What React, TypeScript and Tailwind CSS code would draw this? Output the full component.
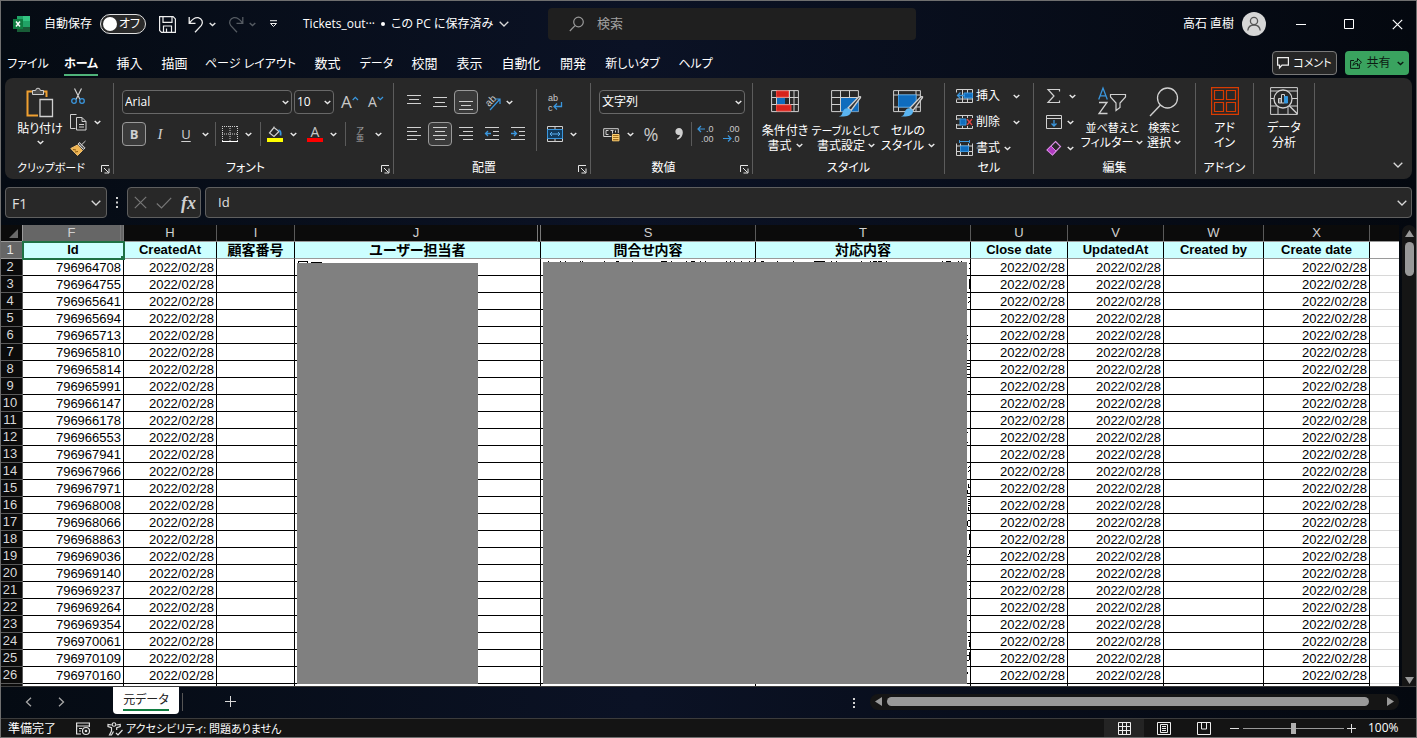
import { useState, type ReactNode } from 'react'

const DATE = '2022/02/28'

const ids = [
  796964708, 796964755, 796965641, 796965694, 796965713, 796965810, 796965814,
  796965991, 796966147, 796966178, 796966553, 796967941, 796967966, 796967971,
  796968008, 796968066, 796968863, 796969036, 796969140, 796969237, 796969264,
  796969354, 796970061, 796970109, 796970160,
]

const columns = [
  { letter: 'F', title: 'Id', width: 'w-[101px]' },
  { letter: 'H', title: 'CreatedAt', width: 'w-[93px]' },
  { letter: 'I', title: '顧客番号', width: 'w-[78px]', jp: true },
  { letter: 'J', title: 'ユーザー担当者', width: 'w-[246px]', jp: true },
  { letter: 'S', title: '問合せ内容', width: 'w-[215px]', jp: true },
  { letter: 'T', title: '対応内容', width: 'w-[215px]', jp: true },
  { letter: 'U', title: 'Close date', width: 'w-[97px]' },
  { letter: 'V', title: 'UpdatedAt', width: 'w-[96px]' },
  { letter: 'W', title: 'Created by', width: 'w-[100px]' },
  { letter: 'X', title: 'Create date', width: 'w-[106px]' },
]

const dateColumns = ['H', 'U', 'V', 'X']

const menuTabs = [
  { label: 'ファイル', style: 'w-[54px] text-[12px]' },
  { label: 'ホーム', style: 'w-[52px] text-[12px]', active: true },
  { label: '挿入', style: 'w-[45px] text-[13px]' },
  { label: '描画', style: 'w-[45px] text-[13px]' },
  { label: 'ページ レイアウト', style: 'w-[107px] text-[12px]' },
  { label: '数式', style: 'w-[47px] text-[13px]' },
  { label: 'データ', style: 'w-[51px] text-[12px]' },
  { label: '校閲', style: 'w-[45px] text-[13px]' },
  { label: '表示', style: 'w-[45px] text-[13px]' },
  { label: '自動化', style: 'w-[58px] text-[13px]' },
  { label: '開発', style: 'w-[46px] text-[13px]' },
  { label: '新しいタブ', style: 'w-[73px] text-[12px]' },
  { label: 'ヘルプ', style: 'w-[53px] text-[12px]' },
]

// [x, width] of the glyph tops that show above the covered S and T cells
const topMarks = [
  [8, 1], [20, 1], [25, 1], [40, 1], [42, 1], [64, 1], [76, 3], [92, 1],
  [121, 6], [131, 1], [146, 1], [151, 4], [160, 1], [165, 1], [186, 1],
  [190, 1], [194, 1], [201, 1], [209, 1], [214, 1], [221, 3], [237, 1],
  [253, 1], [274, 11], [291, 1], [296, 1], [321, 1], [330, 1], [333, 4],
  [338, 4], [346, 1], [402, 1], [406, 5], [418, 1], [421, 1],
]

// [x, y, width, height] of the glyph edges right of the covered T cells
const sideMarks = [
  [2, 8, 1, 1], [2, 13, 1, 1], [2, 24, 1, 10], [1, 42, 2, 1], [2, 46, 1, 1],
  [1, 47, 1, 1], [0, 80, 1, 1], [0, 84, 1, 1], [2, 95, 1, 1], [0, 108, 3, 1],
  [0, 111, 3, 1], [0, 114, 3, 1], [0, 119, 3, 1], [1, 136, 2, 1],
  [0, 177, 1, 1], [0, 187, 1, 1], [2, 211, 1, 1], [1, 212, 1, 1],
  [2, 215, 1, 1], [1, 216, 1, 1], [1, 229, 1, 4], [1, 232, 2, 1],
  [0, 235, 1, 4], [1, 238, 2, 1], [1, 244, 2, 1], [1, 246, 2, 1],
  [1, 248, 2, 1], [1, 250, 2, 1], [1, 252, 1, 4], [1, 255, 2, 1],
  [0, 266, 1, 5], [1, 265, 2, 1], [1, 271, 2, 1], [2, 279, 1, 6],
  [2, 295, 1, 4], [1, 299, 1, 1], [0, 301, 3, 1], [0, 305, 1, 1],
  [2, 330, 1, 1], [2, 334, 1, 1], [2, 365, 1, 1], [1, 381, 2, 1],
  [1, 385, 2, 1], [2, 387, 1, 5], [2, 397, 1, 8], [0, 400, 3, 1],
  [0, 405, 2, 1], [0, 417, 1, 2],
]

function Svg({ w = 16, h = 16, className = '', children }: { w?: number; h?: number; className?: string; children: ReactNode }) {
  return (
    <svg
      width={w}
      height={h}
      viewBox={`0 0 ${w} ${h}`}
      fill="none"
      stroke="#d0d0d0"
      className={`block shrink-0 overflow-visible font-['Liberation_Sans'] ${className}`}
      aria-hidden
    >
      {children}
    </svg>
  )
}

function Chevron({ className = 'text-[#e6e6e6]' }: { className?: string }) {
  return (
    <svg width="7" height="5" viewBox="0 0 7 5" fill="none" stroke="currentColor" strokeWidth="1.4" className={`block shrink-0 ${className}`} aria-hidden>
      <path d="M.7 1l2.800 2.600L6.300 1" />
    </svg>
  )
}

function WideChevron() {
  return (
    <svg width="10" height="6" viewBox="0 0 10 6" fill="none" stroke="#d8d8d8" strokeWidth="1.3" className="block shrink-0" aria-hidden>
      <path d="M.7.800L5 5 9.300.800" />
    </svg>
  )
}

function Tool({ label, active, children }: { label: string; active?: boolean; children: ReactNode }) {
  return (
    <button
      aria-label={label}
      className={`mx-px flex h-6 w-6 shrink-0 items-center justify-center rounded border ${
        active ? 'border-[#9a9a9a] bg-[#3a3a3a]' : 'border-transparent'
      }`}
    >
      {children}
    </button>
  )
}

function Drop({ label, className = 'w-4' }: { label: string; className?: string }) {
  return (
    <button aria-label={label} className={`flex h-6 shrink-0 items-center justify-center ${className}`}>
      <Chevron />
    </button>
  )
}

function Divider() {
  return <div className="mx-1 h-6 w-px shrink-0 bg-[#5a5a5a]" />
}

function Group({ label, launcher, width, children }: { label?: string; launcher?: boolean; width: string; children: ReactNode }) {
  return (
    <section className={`my-[5px] flex shrink-0 flex-col border-r border-[#5c5c5c] ${width}`}>
      <div className="flex min-h-0 flex-1">{children}</div>
      <div className="flex h-3 items-center">
        <span className={`flex-1 text-center ${label === 'クリップボード' ? 'text-[11px]' : ''}`}>{label}</span>
        {launcher ? (
          <button aria-label={`${label}の設定`} className="flex w-4 justify-end pr-[3px] pt-0.5">
            <Svg w={9} h={9}>
              <path d="M.5 7V.500H8M3 3l4.500 4.500M8 3.500V8H3.500" stroke="#e4e4e4" />
            </Svg>
          </button>
        ) : null}
      </div>
    </section>
  )
}

function BigButton({ icon, lines, drop, small, width }: { icon: ReactNode; lines: string[]; drop?: boolean; small?: boolean; width: string }) {
  return (
    <button className={`flex shrink-0 flex-col items-center pt-1 ${width}`}>
      <span className="flex h-[33px] items-start justify-center">{icon}</span>
      <span className={`leading-[15px] ${small ? 'text-[11px]' : ''}`}>{lines[0]}</span>
      <span className={`flex items-center leading-[15px] ${small ? 'gap-[3px]' : 'gap-1'}`}>
        {lines[1]}
        {drop ? <Chevron /> : null}
      </span>
    </button>
  )
}

function Lines({ rows }: { rows: number[][] }) {
  return (
    <Svg>
      {rows.map(([x, y, w]) => (
        <path key={y} d={`M${x} ${y}.5h${w}`} />
      ))}
    </Svg>
  )
}

function Combo({ label, value, width }: { label: string; value: string; width: string }) {
  return (
    <div className={`relative h-6 shrink-0 ${width}`}>
      <select
        aria-label={label}
        defaultValue={value}
        className="h-6 w-full appearance-none rounded border border-[#686868] bg-[#262626] pl-0.5 text-[12px] text-white"
      >
        <option>{value}</option>
      </select>
      <span className="pointer-events-none absolute right-[3px] top-[10px]">
        <Chevron />
      </span>
    </div>
  )
}

function TitleBar() {
  const [autoSave, setAutoSave] = useState(false)
  return (
    <header className="flex h-[47px] shrink-0 items-center pb-px">
      <div className="flex w-[547px] shrink-0 items-center pl-3">
        <svg width="17" height="16" viewBox="0 0 17 16" className="block shrink-0" aria-label="Excel">
          <path d="M4 0h6v5H4z" fill="#21a366" />
          <path d="M10 0h7v5h-7z" fill="#33c481" />
          <path d="M4 5h6v6H4z" fill="#107c41" />
          <path d="M10 5h7v6h-7z" fill="#21a366" />
          <path d="M4 11h13v5H4z" fill="#185c37" />
          <path d="M0 3h10v10H0z" fill="#107c41" />
          <path d="M3 5.500l4 5M7 5.500l-4 5" stroke="#fff" strokeWidth="1.500" />
        </svg>
        <label htmlFor="autosave" className="ml-[14px] w-14 text-[12px]">自動保存</label>
        <div className="relative h-5 w-[46px] shrink-0">
          <input
            id="autosave"
            type="checkbox"
            checked={autoSave}
            onChange={(e) => setAutoSave(e.target.checked)}
            className="block h-5 w-[46px] appearance-none rounded-full border border-[#e0e0e0] bg-[#2a2a2a] before:ml-[2px] before:mt-[2px] before:block before:h-[14px] before:w-[14px] before:rounded-full before:bg-white"
          />
          <span className="pointer-events-none absolute right-1.5 top-0.5 text-[12px] leading-4">オフ</span>
        </div>
        <button aria-label="上書き保存" className="ml-[13px]">
          <Svg w={17} h={17}>
            <path d="M.6.600h13.500l2.300 2.300v13.500H2.500L.6 14.500zM4 .6v5.800h9V.600M4.500 16.400V10h8v6.400M7.500 16v-3.500" stroke="#eee" strokeWidth="1.200" />
          </Svg>
        </button>
        <button aria-label="元に戻す" className="ml-3">
          <Svg w={16} h={17}>
            <path d="M1.200 1v6.300h6.300M1.500 7C4 3.500 7 1.200 10.200 1.700c3.800.7 5.400 4.800 3.200 7.700L7 16.200" stroke="#eee" strokeWidth="1.300" />
          </Svg>
        </button>
        <Drop label="元に戻す一覧" />
        <button aria-label="やり直し" className="ml-2">
          <Svg w={16} h={17}>
            <path d="M14.800 1v6.300H8.500M14.500 7C12 3.500 9 1.200 5.800 1.700 2 2.400.4 6.500 2.600 9.400L9 16.200" stroke="#555b62" strokeWidth="1.300" />
          </Svg>
        </button>
        <span className="flex w-4 justify-center">
          <Chevron className="text-[#555b62]" />
        </span>
        <button aria-label="クイック アクセス ツール バーのカスタマイズ" className="ml-[9px]">
          <Svg w={9} h={8}>
            <path d="M1 .700h7" stroke="#eee" />
            <path d="M1.500 3.500h6l-3 3z" stroke="#eee" />
          </Svg>
        </button>
        <button className="ml-[25px] flex items-center gap-1.5 whitespace-nowrap text-[12px]">
          <span>Tickets_out···</span>
          <span className="h-1 w-1 rounded-full bg-white" />
          <span>この PC に保存済み</span>
          <WideChevron />
        </button>
      </div>
      <label className="flex h-8 min-w-0 max-w-[368px] flex-1 items-center rounded bg-[#1f1f1f] pl-[21px]">
        <Svg w={16} h={16}>
          <circle cx="9.500" cy="6" r="4.800" stroke="#999" strokeWidth="1.200" />
          <path d="M6 9.600L.8 15" stroke="#999" strokeWidth="1.200" />
        </Svg>
        <input type="search" placeholder="検索" aria-label="検索" className="ml-3 w-full bg-transparent text-[13px] placeholder:text-[#a0a0a0]" />
      </label>
      <div className="ml-auto flex shrink-0 items-center">
        <span className="text-[12px]">高石 直樹</span>
        <button aria-label="アカウント" className="ml-2 flex h-6 w-6 items-center justify-center rounded-full bg-[#d6d6d6]">
          <Svg>
            <circle cx="8" cy="5" r="3.600" stroke="#555" strokeWidth="1.300" />
            <path d="M1.800 14.500c.4-3.800 2.900-5.500 6.200-5.500s5.800 1.700 6.200 5.500" stroke="#555" strokeWidth="1.300" />
          </Svg>
        </button>
        <button aria-label="最小化" className="flex h-8 w-12 items-center justify-center pl-[22px]">
          <Svg w={10} h={10}><path d="M0 5.500h10" stroke="#fff" /></Svg>
        </button>
        <button aria-label="最大化" className="flex h-8 w-12 items-center justify-center pl-[22px]">
          <Svg w={10} h={10}><path d="M.5.500h9v9h-9z" stroke="#fff" /></Svg>
        </button>
        <button aria-label="閉じる" className="flex h-8 w-[54px] items-center justify-center pl-4">
          <Svg w={11} h={11}><path d="M.8.800l9.400 9.400M10.200.8L.8 10.200" stroke="#fff" strokeWidth="1.200" /></Svg>
        </button>
      </div>
    </header>
  )
}

function MenuBar() {
  return (
    <nav className="flex h-[30px] shrink-0 items-center">
      {menuTabs.map((tab) => (
        <button key={tab.label} className={`flex h-full shrink-0 items-center justify-center whitespace-nowrap pt-0.5 ${tab.style}`}>
          {tab.active ? (
            <span className="border-b-2 border-[#4fb37a] pt-0.5 font-bold leading-5">{tab.label}</span>
          ) : (
            tab.label
          )}
        </button>
      ))}
      <button className="ml-auto flex h-6 w-[65px] items-center justify-center gap-1 rounded border border-[#7a7a7a] bg-[#262626] text-[11px]">
        <Svg w={12} h={12}>
          <path d="M.6.600h10.800v7.500H5L2.500 11V8.100H.6z" stroke="#eee" strokeWidth="1.200" />
        </Svg>
        コメント
      </button>
      <button className="ml-2 mr-[7px] flex h-6 w-16 items-center justify-center gap-1 rounded bg-[#3aa35f] text-[12px] text-[#0c1a12]">
        <Svg w={12} h={12}>
          <path d="M4 3.500H.600v7.900h8.800V8M3 8.500c.3-3 2-4.300 4.500-4.300V1.500l4 3.800-4 3.600V6.500C5.500 6.500 4 7 3 8.500z" stroke="#0c1a12" />
        </Svg>
        共有
        <Chevron className="ml-0.5 text-[#0c1a12]" />
      </button>
    </nav>
  )
}

const brush = (
  <>
    <path d="M29.500 7.500L20 20.500l-3-2.500L27.300 7.200c1.200-1 2.800-.6 2.200.3z" fill="#333" stroke="#d0d0d0" strokeWidth="1.300" />
    <path d="M16.500 18.200c2.200.3 3.500 1.700 3.500 3.500-.3 3.800-5 5.300-12 4.800 3-1 3-2.500 3.700-4.500.8-2.400 2.500-4 4.800-3.800z" fill="#5ab4f0" stroke="none" />
  </>
)

function Ribbon() {
  return (
    <div className="mx-1 flex h-[101px] shrink-0 overflow-hidden whitespace-nowrap rounded-lg bg-[#282828] text-[12px] leading-4">
      <Group label="クリップボード" launcher width="w-[109px]">
        <button className="ml-[5px] flex w-[60px] shrink-0 flex-col items-center pt-1">
          <Svg w={28} h={31}>
            <path d="M8 4.500H1.500v24H12M15 4.500h5.500V10" stroke="#f0a030" strokeWidth="2" />
            <path d="M6.500 7.500v-4h3.200a2.300 2.300 0 0 1 4.600 0h3.200v4z" fill="#4a4a4a" />
            <path d="M14 12.500h12.500v17H14z" fill="#282828" strokeWidth="1.300" />
          </Svg>
          <span className="mb-0.5 mt-0.5 leading-[18px]">貼り付け</span>
          <Chevron />
        </button>
        <div className="flex flex-col">
          <button aria-label="切り取り" className="flex h-[26px] items-center">
            <Svg>
              <path d="M4.500.500l5.500 11M11.500.500l-5.500 11" strokeWidth="1.200" />
              <circle cx="4" cy="13" r="2.300" stroke="#3a96dd" strokeWidth="1.300" />
              <circle cx="12" cy="13" r="2.300" stroke="#3a96dd" strokeWidth="1.300" />
            </Svg>
          </button>
          <div className="flex h-[26px] items-center">
            <button aria-label="コピー">
              <Svg w={17} h={17}>
                <path d="M5.500 14.500h-5V.500h6M6.500 3.500h5.500l4 4v8.500H6.500zM12 3.500v4h4M9 10.500h5M9 13h5" />
              </Svg>
            </button>
            <Drop label="コピーのオプション" className="w-5" />
          </div>
          <button aria-label="書式のコピー" className="flex h-[26px] items-center">
            <Svg w={17} h={17}>
              <path d="M15.500 1l-4.700 4.500M8 4l5.500 5.500 1.500-1.600L9.500 2.400z" fill="#666" />
              <path d="M7.500 5L.8 8.500 7.500 15.500l5-5z" fill="#f0b552" stroke="#f0c070" />
              <path d="M3 9.500l3 .5M5 12l3-.5" stroke="#8a5a10" />
            </Svg>
          </button>
        </div>
      </Group>

      <Group label="フォント" launcher width="w-[280px]">
        <div className="flex flex-col gap-2 pl-[7px] pt-[7px]">
          <div className="flex items-center gap-[2px] pl-px">
            <Combo label="フォント名" value="Arial" width="w-[170px]" />
            <Combo label="フォント サイズ" value="10" width="w-10" />
            <button aria-label="フォント サイズの拡大" className="ml-[5px] flex w-6 items-center text-[17px] leading-6 text-[#c8c8c8]">
              A
              <Svg w={7} h={14}><path d="M.7 5l2.600-2.600L6 5" stroke="#3a96dd" strokeWidth="1.300" /></Svg>
            </button>
            <button aria-label="フォント サイズの縮小" className="ml-px flex w-6 items-center text-[14px] leading-6 text-[#c8c8c8]">
              A
              <Svg w={7} h={14}><path d="M.7 2l2.600 2.600L6 2" stroke="#3a96dd" strokeWidth="1.300" /></Svg>
            </button>
          </div>
          <div className="flex items-center">
            <Tool label="太字" active><span className="text-[13px] font-bold text-[#d0d0d0]">B</span></Tool>
            <Tool label="斜体"><span className="font-['Liberation_Serif'] text-[15px] italic text-[#d0d0d0]">I</span></Tool>
            <Tool label="下線"><span className="text-[13px] text-[#d0d0d0] underline underline-offset-2">U</span></Tool>
            <Drop label="下線の種類" className="w-3" />
            <Divider />
            <button aria-label="罫線" className="flex w-5 justify-center">
              <Svg>
                <path d="M.5 0v15M15.500 0v15M8 0v15M0 .500h16M0 8h16" strokeDasharray="1 1" />
                <path d="M0 15.500h16" stroke="#fff" />
              </Svg>
            </button>
            <Drop label="罫線の種類" />
            <Divider />
            <button aria-label="塗りつぶしの色" className="flex w-5 justify-center">
              <Svg w={16} h={16}>
                <path d="M7 1.500L2.500 7l4.500 3.500L12 5.500 7 1.500zM7 1.500V.500" strokeWidth="1.200" />
                <path d="M11.500 4c2 .5 2.500 2.500 2 5.500" stroke="#3a96dd" strokeWidth="1.800" />
                <path d="M0 12h16v4H0z" fill="#ffff00" stroke="none" />
              </Svg>
            </button>
            <Drop label="塗りつぶしの色の一覧" />
            <button aria-label="フォントの色" className="ml-1 flex w-5 flex-col items-center">
              <span className="text-[14px] leading-3 text-[#c8c8c8]">A</span>
              <span className="h-1 w-4 bg-[#ff0000]" />
            </button>
            <Drop label="フォントの色の一覧" />
            <Divider />
            <button aria-label="ふりがなの表示" className="flex w-5 flex-col items-center text-[8px] leading-[8px] text-[#a8a8a8]">
              <span>ア</span>
              <span>亜</span>
            </button>
            <Drop label="ふりがなの設定" />
          </div>
        </div>
      </Group>

      <Group label="配置" launcher width="w-[197px]">
        <div className="flex flex-col gap-2 pl-[7px] pt-[7px]">
          <div className="flex items-center">
            <Tool label="上揃え"><Lines rows={[[1, 1, 14], [3, 5, 10], [1, 9, 14]]} /></Tool>
            <Tool label="上下中央揃え"><Lines rows={[[1, 3, 14], [3, 8, 10], [1, 12, 14]]} /></Tool>
            <Tool label="下揃え" active><Lines rows={[[1, 7, 14], [3, 11, 10], [1, 15, 14]]} /></Tool>
            <Tool label="方向">
              <Svg w={17} h={17}>
                <text x="0" y="0" fontSize="10" fill="#c8c8c8" stroke="none" transform="translate(5 13) rotate(-45)">ab</text>
                <path d="M6 16L15.500 5.500M11 5h5v5" stroke="#3a96dd" strokeWidth="1.200" />
              </Svg>
            </Tool>
            <Drop label="方向の一覧" className="w-2" />
          </div>
          <div className="flex items-center">
            <Tool label="左揃え"><Lines rows={[[1, 1, 14], [1, 5, 10], [1, 9, 14], [1, 13, 10]]} /></Tool>
            <Tool label="中央揃え" active><Lines rows={[[1, 1, 14], [3, 5, 10], [1, 9, 14], [3, 13, 10]]} /></Tool>
            <Tool label="右揃え"><Lines rows={[[1, 1, 14], [5, 5, 10], [1, 9, 14], [5, 13, 10]]} /></Tool>
            <Tool label="インデントを減らす">
              <Svg>
                <path d="M1 1.500h14M9 5.500h6M9 9.500h6M1 13.500h14" />
                <path d="M7 7.500H1.500M4 5L1.500 7.500 4 10" stroke="#3a96dd" strokeWidth="1.300" />
              </Svg>
            </Tool>
            <Tool label="インデントを増やす">
              <Svg>
                <path d="M1 1.500h14M9 5.500h6M9 9.500h6M1 13.500h14" />
                <path d="M1 7.500h5.500M4 5l2.500 2.500L4 10" stroke="#3a96dd" strokeWidth="1.300" />
              </Svg>
            </Tool>
          </div>
        </div>
        <div className="mx-[5px] mt-1.5 h-[62px] w-px bg-[#5a5a5a]" />
        <div className="flex flex-col gap-2 pt-[7px]">
          <Tool label="折り返して全体を表示する">
            <Svg w={16} h={18}>
              <text x="1" y="8" fontSize="9" fill="#c8c8c8" stroke="none">ab</text>
              <text x="1" y="18" fontSize="9" fill="#c8c8c8" stroke="none">c</text>
              <path d="M14.500 9v4.500H7.500M10 10.500l-3 3 3 3" stroke="#3a96dd" strokeWidth="1.300" />
            </Svg>
          </Tool>
          <div className="flex">
            <Tool label="セルを結合して中央揃え">
              <Svg>
                <path d="M.5.500h15v15H.500zM8 .500v3M8 12.500v3" />
                <path d="M.5 3.500h15v9H.500z" fill="#123b5c" stroke="#3a96dd" />
                <path d="M3 8h10M5 6L3 8l2 2M11 6l2 2-2 2" stroke="#5ab0f0" />
              </Svg>
            </Tool>
            <Drop label="結合の一覧" className="w-2.5" />
          </div>
        </div>
      </Group>

      <Group label="数値" launcher width="w-[162px]">
        <div className="flex flex-col gap-2 pl-2 pt-[7px]">
          <Combo label="表示形式" value="文字列" width="w-[146px]" />
          <div className="flex items-center">
            <button aria-label="通貨表示形式" className="flex w-6 justify-center">
              <Svg w={17} h={16}>
                <path d="M8.500 10.500H.700V2.700h14.600V7M5.500 4.500H3v4h2.500M9.500 4.500v3M7.500 4.500h3M12.500 4.500v2" />
                <path d="M9.500 8.500h6.500v6.300H9.500zM9.500 10.500h6.500M9.500 12.500h6.500" fill="#a07020" stroke="#ffcf70" />
              </Svg>
            </button>
            <Drop label="通貨の一覧" className="w-3.5" />
            <button className="ml-0.5 flex w-6 justify-center text-[18px] leading-6 text-[#c8c8c8]">%</button>
            <button aria-label="桁区切りスタイル" className="ml-1 flex w-6 justify-center">
              <Svg w={10} h={14}>
                <path d="M5 1c2.300 0 3.800 1.700 3.800 4.200 0 3.500-2 6.500-5.500 7.600l-.5-1c1.800-.9 3-2.400 3.200-4C3.500 8.600 1.400 7 1.400 4.500 1.400 2.400 3 1 5 1z" fill="#d0d0d0" stroke="none" />
              </Svg>
            </button>
            <div className="h-6 w-px bg-[#5a5a5a]" />
            <Tool label="小数点以下の表示桁数を増やす">
              <Svg w={17} h={18}>
                <text x="9" y="7" fontSize="9" fill="#c8c8c8" stroke="none">.0</text>
                <text x="4" y="17" fontSize="9" fill="#c8c8c8" stroke="none">.00</text>
                <path d="M8 4H1M4 1L1 4l3 3" stroke="#3a96dd" strokeWidth="1.200" />
              </Svg>
            </Tool>
            <Tool label="小数点以下の表示桁数を減らす">
              <Svg w={17} h={18}>
                <text x="4" y="7" fontSize="9" fill="#c8c8c8" stroke="none">.00</text>
                <text x="9" y="17" fontSize="9" fill="#c8c8c8" stroke="none">.0</text>
                <path d="M0 13.500h8M5 10.500l3 3-3 3" stroke="#3a96dd" strokeWidth="1.200" />
              </Svg>
            </Tool>
          </div>
        </div>
      </Group>

      <Group label="スタイル" width="w-[192px]">
        <div className="flex pl-[5px] pt-[3px]">
          <BigButton
            width="w-[54px]"
            drop
            lines={['条件付き', '書式']}
            icon={
              <Svg w={28} h={24}>
                <path d="M.6.600h26.800v21H.600zM.6 7.500h26.800M.6 14.500h26.800M18.500.500v21M23 .5v21M5.500.500v21" />
                <path d="M5.500 1h12v6h-12zM5.500 15h14.500v6H5.500z" fill="#d8231c" stroke="#e8473f" />
                <path d="M6 8h8v6H6z" fill="#0f6cbd" stroke="none" />
              </Svg>
            }
          />
          <BigButton
            width="w-[68px]"
            drop
            small
            lines={['テーブルとして', '書式設定']}
            icon={
              <Svg w={30} h={28}>
                <path d="M.6.600h26.800v21H.600zM.6 7.500h26.800M.6 14.500h26.800M9.500.500v21M18.500.500v21" />
                <path d="M10 8h17.500v13.500H10z" fill="#0f6cbd" stroke="none" />
                {brush}
              </Svg>
            }
          />
          <BigButton
            width="w-14"
            drop
            lines={['セルの', 'スタイル']}
            icon={
              <Svg w={30} h={28}>
                <path d="M.6.600h26.800v21H.600zM.6 5h26.800M.6 17h26.800M5.500.500v21M23 .5v21" />
                <path d="M5.500 5h17.500v12H5.500z" fill="#0f6cbd" stroke="#3a96dd" />
                {brush}
              </Svg>
            }
          />
        </div>
      </Group>

      <Group label="セル" width="w-[89px]">
        <div className="flex flex-col pl-[11px]">
          <button className="flex h-[26px] w-16 items-center">
            <Svg w={17} h={16}>
              <path d="M.5 4.500v-3h16v13H.500v-3M.5 11h16M6.500 1.500v13M11.500 1.500v13" />
              <path d="M8 5h8.500v5H8z" fill="#0f6cbd" stroke="#3a96dd" />
              <path d="M9 7.500H1.500M4.500 4.500l-3 3 3 3" stroke="#3a96dd" strokeWidth="1.300" />
            </Svg>
            <span className="ml-[3px] flex-1 text-left">挿入</span>
            <Chevron />
          </button>
          <button className="flex h-[26px] w-16 items-center">
            <Svg w={17} h={16}>
              <path d="M.5 4V1.500h16V4M.5 12v2.500h16V12M.5 5h4M.5 11h4M6.500 1.500V4M6.500 12v2.500M11.500 1.500V4M11.500 12v2.500M.5 4v2M.5 10v4" />
              <path d="M4 5h6v6H4z" fill="#0f6cbd" stroke="#3a96dd" />
              <path d="M11 5l5 6M16 5l-5 6" stroke="#e04545" strokeWidth="1.300" />
            </Svg>
            <span className="ml-[3px] flex-1 text-left">削除</span>
            <Chevron />
          </button>
          <button className="flex h-[26px] w-16 items-center">
            <Svg w={17} h={16}>
              <path d="M.5 3.500v12h16v-12M.5 6h16M.5 11.500h16M4.500 3.500v12M12.500 3.500v12" />
              <path d="M4.500 6h8v5.500h-8z" fill="#0f6cbd" stroke="#3a96dd" />
              <path d="M3.500 1.500h10M3.500 0v3M13.500 0v3" stroke="#3a96dd" />
            </Svg>
            <span className="ml-[3px] mr-1">書式</span>
            <Chevron />
          </button>
        </div>
      </Group>

      <Group label="編集" width="w-[162px]">
        <div className="flex flex-col pl-3">
          <div className="flex h-[26px] items-center">
            <button aria-label="合計">
              <Svg><path d="M13.500 3.500v-2H2l6 6.500-6 6.500h11.500v-2" strokeWidth="1.200" /></Svg>
            </button>
            <Drop label="合計の一覧" className="w-5" />
          </div>
          <div className="flex h-[26px] items-center">
            <button aria-label="フィル">
              <Svg>
                <path d="M.5 1.500h15v13H.500zM.5 4.500h15" />
                <path d="M8 6v6M5.500 9.500L8 12l2.500-2.500" stroke="#3a96dd" strokeWidth="1.300" />
              </Svg>
            </button>
            <Drop label="フィルの一覧" />
          </div>
          <div className="flex h-[26px] items-center">
            <button aria-label="クリア">
              <Svg>
                <path d="M9.500 1.500l5 5-8 8.500-5.500-5z" stroke="#d58be0" strokeWidth="1.200" />
                <path d="M5 6l5 5-3.500 4L1 10z" fill="#b03ac0" stroke="#d58be0" />
              </Svg>
            </button>
            <Drop label="クリアの一覧" />
          </div>
        </div>
        <BigButton
          width="w-[60px]"
          drop
          small
          lines={['並べ替えと', 'フィルター']}
          icon={
            <Svg w={28} h={28}>
              <path d="M.7 12.500L5 1l4.300 11.500M2.200 8.800h5.600" stroke="#3a96dd" strokeWidth="1.300" />
              <path d="M1 15.500h8L1 26.500h8.500" strokeWidth="1.300" />
              <path d="M12.500 7.500h15v2.500L22 16v4.500l-4 3V16l-5.500-6z" strokeWidth="1.200" />
            </Svg>
          }
        />
        <BigButton
          width="w-11"
          drop
          small
          lines={['検索と', '選択']}
          icon={
            <Svg w={30} h={30}>
              <circle cx="18.500" cy="11" r="10" strokeWidth="1.300" />
              <path d="M11.500 18L1 29" strokeWidth="1.400" />
            </Svg>
          }
        />
      </Group>

      <Group label="アドイン" width="w-[58px]">
        <BigButton
          width="w-full"
          lines={['アド', 'イン']}
          icon={
            <Svg w={28} h={28}>
              <path d="M.6.600h26.800v26.800H.600zM3.500 3.500h9v9h-9zM15.500 3.500h9v9h-9zM3.500 15.500h9v9h-9zM15.500 15.500h9v9h-9z" stroke="#d83b01" strokeWidth="1.200" />
            </Svg>
          }
        />
      </Group>

      <Group width="w-[61px]">
        <BigButton
          width="w-full"
          lines={['データ', '分析']}
          icon={
            <Svg w={28} h={28}>
              <path d="M.6.600h26.800v26.800H.600zM.6 4h26.800M.6 11.500h26.800M.6 19h26.800M8 19v8M18 19v8" />
              <circle cx="13" cy="12" r="9" fill="#282828" strokeWidth="1.300" />
              <path d="M19.500 19l8 8" strokeWidth="1.400" />
              <path d="M8.500 11.500h3V16h-3z" fill="#777" />
              <path d="M11.500 7.500h3V16h-3z" />
              <path d="M14.500 9.500h3V16h-3z" fill="#2f9be0" stroke="#3a96dd" />
            </Svg>
          }
        />
      </Group>

      <button aria-label="リボンを折りたたむ" className="ml-auto mr-[9px] mt-auto pb-[11px]">
        <WideChevron />
      </button>
    </div>
  )
}

function FormulaBar() {
  return (
    <div className="mx-1 my-2 flex h-[31px] shrink-0 items-center">
      <label className="flex h-full w-[102px] shrink-0 items-center rounded border border-[#5f5f5f] bg-[#282828] pr-[5px]">
        <input aria-label="名前ボックス" defaultValue="F1" className="min-w-0 flex-1 bg-transparent pl-1.5 pt-0.5 text-[14px] text-[#e0e0e0]" />
        <WideChevron />
      </label>
      <span className="flex w-5 justify-center">
        <Svg w={2} h={11}>
          <path d="M0 0h2v2H0zM0 4.500h2v2H0zM0 9h2v2H0z" fill="#d0d0d0" stroke="none" />
        </Svg>
      </span>
      <div className="flex h-full w-[74px] shrink-0 items-center gap-[9px] rounded border border-[#5f5f5f] bg-[#282828] pl-1.5">
        <button aria-label="キャンセル">
          <Svg w={13} h={13}><path d="M.8.800l11.400 11.400M12.200.8L.8 12.200" stroke="#777" strokeWidth="1.200" /></Svg>
        </button>
        <button aria-label="入力">
          <Svg w={16} h={12}><path d="M.8 6.500L5.500 11 15.200.800" stroke="#777" strokeWidth="1.200" /></Svg>
        </button>
        <button className="font-['Liberation_Serif'] text-[18px] font-bold italic leading-5 text-[#d0d0d0]">fx</button>
      </div>
      <label className="ml-1 flex h-full min-w-0 flex-1 items-center rounded border border-[#5f5f5f] bg-[#282828] pr-1">
        <input aria-label="数式バー" defaultValue="Id" className="min-w-0 flex-1 bg-transparent pl-3 text-[13px] text-[#e0e0e0]" />
        <WideChevron />
      </label>
    </div>
  )
}

function Sheet() {
  const rowHead = 'border-b border-r border-[#5a5a5a] bg-[#0b0b0b] p-0 pr-[3px] text-center font-normal leading-4 text-[#d8d8d8]'
  return (
    <div className="relative min-w-0 flex-1 overflow-hidden bg-white font-['Liberation_Sans','Noto_Sans_CJK_JP',sans-serif] text-[13px] text-black">
      <table className="w-full table-fixed border-separate border-spacing-0">
        <thead>
          <tr className="h-[17px] bg-[#0b0b0b] text-[#d0d0d0]">
            <th className="w-[22px] border-b border-r border-[#9a9a9a] p-0">
              <svg width="10" height="10" viewBox="0 0 10 10" className="ml-auto mr-1 block" aria-hidden>
                <path d="M10 1v9H1z" fill="#6a6a6a" />
              </svg>
            </th>
            {columns.map((col) => (
              <th
                key={col.letter}
                className={`border-b border-b-[#9a9a9a] p-0 font-normal leading-4 ${col.width} ${
                  col.letter === 'F' || col.letter === 'J' ? 'border-r-4 border-double border-r-[#7a7a7a]' : 'border-r border-r-[#5a5a5a]'
                } ${col.letter === 'F' ? 'bg-[#666]' : ''}`}
              >
                {col.letter}
              </th>
            ))}
            <th className="border-b border-[#9a9a9a] p-0" />
          </tr>
        </thead>
        <tbody>
          <tr className="h-[17px]">
            <th className="border-b border-r border-[#9a9a9a] bg-[#666] p-0 pr-[3px] text-center font-normal leading-4 text-[#e4e4e4]">1</th>
            {columns.map((col) => (
              <td
                key={col.letter}
                className={`border-b border-r border-b-[#9a9a9a] border-r-black bg-[#ccffff] p-0 text-center font-bold leading-4 ${
                  col.jp ? 'text-[14px]' : ''
                }`}
              >
                {col.title}
              </td>
            ))}
            <td className="border-b border-[#9a9a9a] p-0" />
          </tr>
          {ids.map((id, i) => (
            <tr key={id} className="h-[17px]">
              <th className={rowHead}>{i + 2}</th>
              {columns.map((col) => (
                <td key={col.letter} className="border-b border-r border-black p-0 pr-0.5 pt-px text-right leading-[15px]">
                  {col.letter === 'F' ? id : dateColumns.includes(col.letter) ? DATE : null}
                </td>
              ))}
              <td className="border-b border-[#d8d8d8] p-0" />
            </tr>
          ))}
          <tr className="h-[17px]">
            <th className={rowHead} />
            {columns.map((col) => (
              <td key={col.letter} className="border-r border-black p-0" />
            ))}
            <td className="p-0" />
          </tr>
        </tbody>
      </table>

      {/* selected cell */}
      <div className="absolute left-[21px] top-4 h-[19px] w-[103px] border-2 border-[#1e7145]" />
      <div className="absolute left-[120px] top-[31px] h-1 w-1 bg-[#1e7145]" />

      {/* masked columns */}
      <div className="absolute left-[296px] top-[38px] h-[421px] w-[181px] bg-[#808080]" />
      <div className="absolute left-[542px] top-[37px] h-[422px] w-[424px] bg-[#808080]" />
      <svg width="24" height="2" className="absolute left-[297px] top-9" aria-hidden>
        <path d="M0 0h10v1H0zM0 1h1v1H0zM9 1h1v1H9zM13 1h11v1H13z" />
      </svg>
      <svg width="430" height="1" className="absolute left-[539px] top-9" aria-hidden>
        {topMarks.map(([x, w]) => (
          <rect key={x} x={x} y="0" width={w} height="1" />
        ))}
      </svg>
      <svg width="3" height="430" className="absolute left-[966px] top-[30px]" aria-hidden>
        {sideMarks.map(([x, y, w, h]) => (
          <rect key={`${x}-${y}`} x={x} y={y} width={w} height={h} />
        ))}
      </svg>
    </div>
  )
}

function SheetTabs() {
  return (
    <div className="flex h-8 shrink-0 items-center border-t border-[#3c3c3c] pb-0.5">
      <button aria-label="前のシート" className="ml-6">
        <Svg w={7} h={10}><path d="M6 .8L1.500 5 6 9.200" stroke="#a8a8a8" strokeWidth="1.300" /></Svg>
      </button>
      <button aria-label="次のシート" className="ml-[26px]">
        <Svg w={7} h={10}><path d="M1 .8L5.500 5 1 9.200" stroke="#a8a8a8" strokeWidth="1.300" /></Svg>
      </button>
      <button className="ml-12 flex h-[27px] w-[66px] justify-center self-start rounded-b bg-white pt-0.5 text-[12px] text-[#222]">
        <span className="h-[22px] border-b-2 border-[#107c41] leading-[22px]">元データ</span>
      </button>
      <div className="ml-[3px] h-[18px] w-px bg-[#555]" />
      <button aria-label="新しいシート" className="ml-[42px]">
        <Svg w={11} h={11}><path d="M0 5.500h11M5.500 0v11" stroke="#d8d8d8" /></Svg>
      </button>
      <div className="ml-auto mr-[15px] pt-0.5">
        <Svg w={2} h={10}>
          <path d="M0 0h2v2H0zM0 4h2v2H0zM0 8h2v2H0z" fill="#d0d0d0" stroke="none" />
        </Svg>
      </div>
      <div className="mr-[17px] flex h-4 w-[529px] items-center justify-between rounded-full bg-[#151515] px-[5px]">
        <Svg w={7} h={9}><path d="M7 0v9L0 4.500z" fill="#999" stroke="none" /></Svg>
        <div className="ml-[5px] mr-[18px] h-[9px] flex-1 rounded-full bg-[#999]" />
        <Svg w={7} h={9}><path d="M0 0v9l7-4.500z" fill="#999" stroke="none" /></Svg>
      </div>
    </div>
  )
}

function StatusBar() {
  const [zoom, setZoom] = useState(100)
  return (
    <footer className="flex h-[19px] shrink-0 items-center border-t border-[#3c3c3c] bg-[#141414] text-[12px] leading-[18px]">
      <span className="ml-[7px] w-[68px] pt-px">準備完了</span>
      <button aria-label="マクロの記録">
        <Svg w={15} h={13}>
          <path d="M5 12H.600V1h12.800v4M.6 4h12.800M3 6.500h3M3 9h2" stroke="#e0e0e0" strokeWidth="1.200" />
          <circle cx="10" cy="9" r="3.500" stroke="#e0e0e0" strokeWidth="1.200" />
          <circle cx="10" cy="9" r="1.300" fill="#e0e0e0" stroke="none" />
        </Svg>
      </button>
      <button className="ml-4 flex items-center gap-0.5 pt-px text-[11px]">
        <Svg w={17} h={14}>
          <circle cx="7" cy="2.500" r="1.800" stroke="#e0e0e0" strokeWidth="1.100" />
          <path d="M4.800 3L1 2.500v2l3.500 1.200V9l-2 4h2l2-3.500M9.200 3l4-.5v2L9.700 5.700V8M9 11l2 2 4.500-5" stroke="#e0e0e0" strokeWidth="1.200" />
        </Svg>
        アクセシビリティ: 問題ありません
      </button>
      <div className="ml-auto flex h-full items-center">
        <button aria-label="標準" className="flex h-full w-10 items-center justify-center bg-[#242424]">
          <Svg w={13} h={13}><path d="M.5.500h12v12H.500zM4.500.500v12M8.500.500v12M.5 4.500h12M.5 8.500h12" stroke="#eee" /></Svg>
        </button>
        <button aria-label="ページ レイアウト" className="flex h-full w-10 items-center justify-center">
          <Svg w={14} h={13}><path d="M.5.500h13v12H.500zM3.500 2.500h7v8h-7zM5 4.500h4M5 6.500h4M5 8.500h4" stroke="#eee" /></Svg>
        </button>
        <button aria-label="改ページ プレビュー" className="flex h-full w-10 items-center justify-center">
          <Svg w={14} h={13}><path d="M.5.500h13v12H.500zM4.500.500v6.500h5V.500" stroke="#eee" /></Svg>
        </button>
        <button aria-label="縮小" className="ml-1.5">
          <Svg w={9} h={9}><path d="M0 4.500h9" stroke="#e0e0e0" /></Svg>
        </button>
        <input
          type="range"
          aria-label="ズーム"
          min={0}
          max={200}
          value={zoom}
          onChange={(e) => setZoom(Number(e.target.value))}
          className="ml-1 mr-[3px] h-3 w-[101px] appearance-none bg-transparent [&::-webkit-slider-runnable-track]:h-px [&::-webkit-slider-runnable-track]:bg-[#999] [&::-webkit-slider-thumb]:-mt-[5px] [&::-webkit-slider-thumb]:h-[11px] [&::-webkit-slider-thumb]:w-[5px] [&::-webkit-slider-thumb]:appearance-none [&::-webkit-slider-thumb]:bg-[#b0b0b0]"
        />
        <button aria-label="拡大">
          <Svg w={9} h={9}><path d="M0 4.500h9M4.500 0v9" stroke="#e0e0e0" /></Svg>
        </button>
        <span className="ml-3 w-12">{zoom}%</span>
      </div>
    </footer>
  )
}

export default function App() {
  return (
    <main className="flex h-screen flex-col overflow-hidden border border-[#6f6f6f] bg-[linear-gradient(90deg,#050b13,#0b1225_45%,#04080f)] font-['Open_Sans','Noto_Sans_CJK_JP',sans-serif] text-white [font-feature-settings:'palt']">
      <TitleBar />
      <MenuBar />
      <Ribbon />
      <FormulaBar />
      <div className="-mt-px flex min-h-0 flex-1">
        <Sheet />
        <div className="ml-[3px] flex w-[14px] shrink-0 flex-col items-center rounded-t-lg bg-[#151515] pb-0.5 pt-[5px]">
          <Svg w={9} h={7}><path d="M0 7h9L4.500 0z" fill="#999" stroke="none" /></Svg>
          <div className="mt-[5px] h-[34px] w-[9px] rounded-full bg-[#999]" />
          <div className="mt-auto">
            <Svg w={9} h={7}><path d="M0 0h9L4.500 7z" fill="#999" stroke="none" /></Svg>
          </div>
        </div>
      </div>
      <SheetTabs />
      <StatusBar />
    </main>
  )
}
